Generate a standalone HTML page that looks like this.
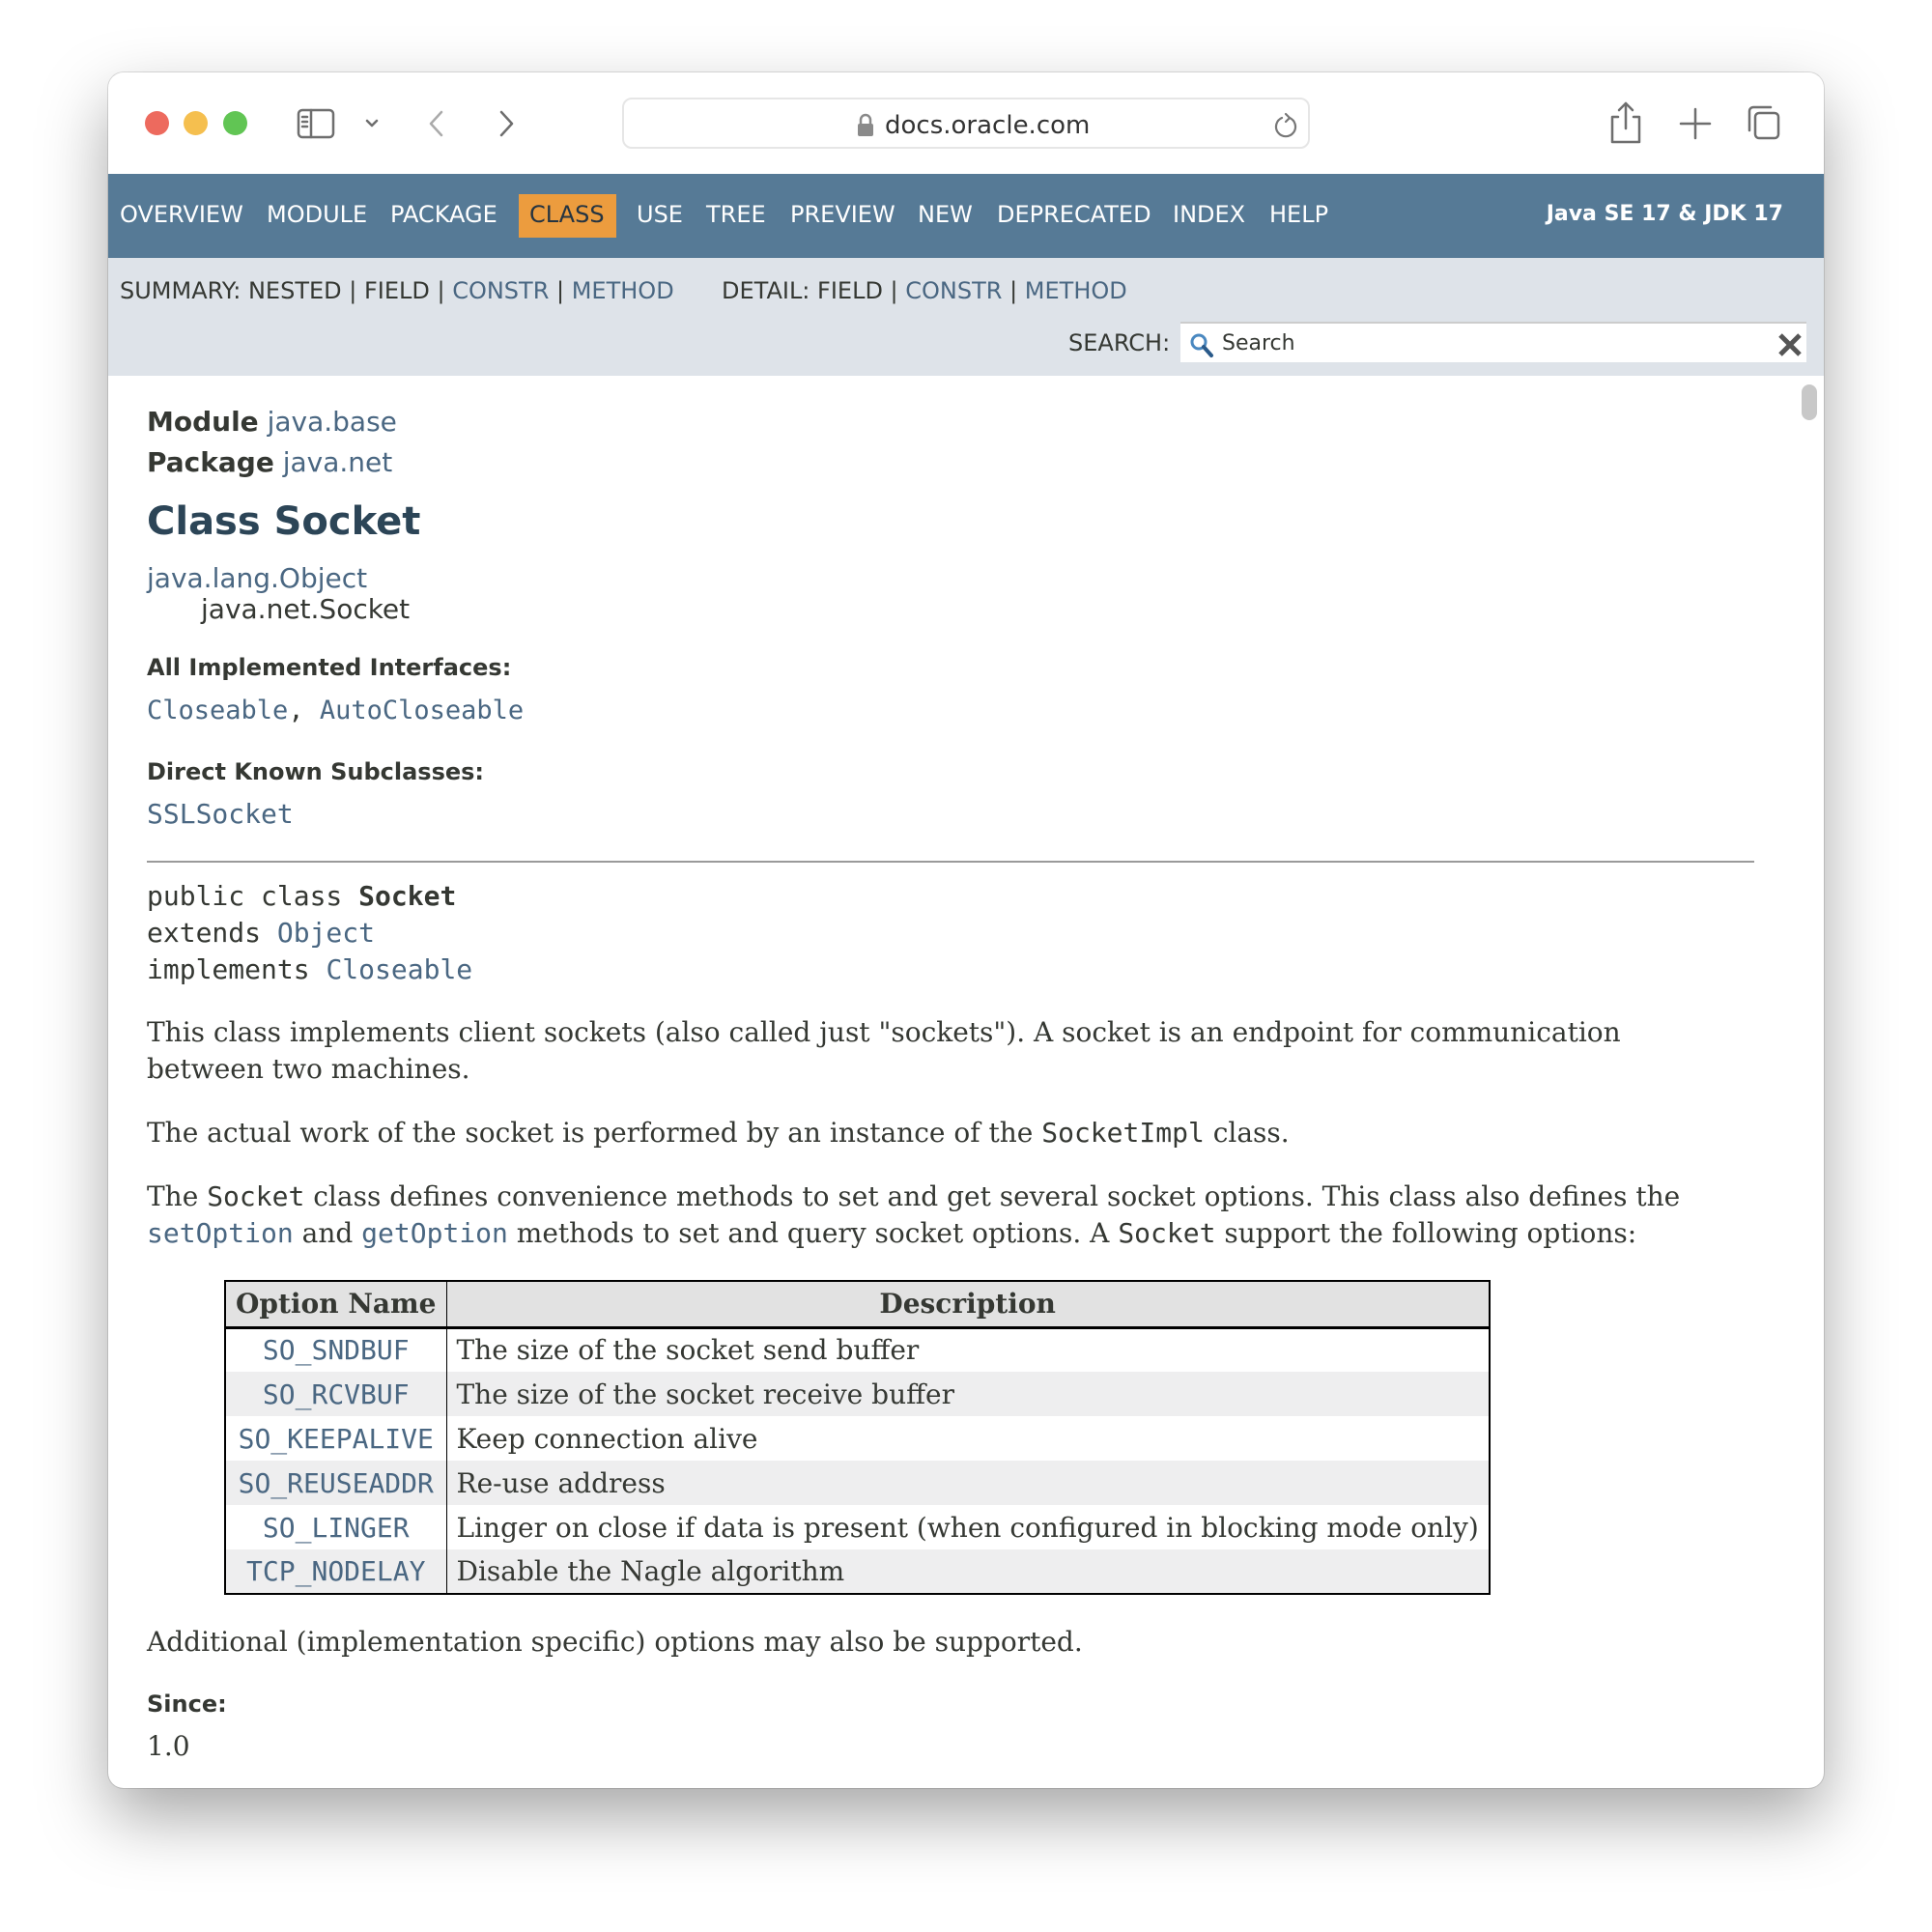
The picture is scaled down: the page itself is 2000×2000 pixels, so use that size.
<!DOCTYPE html>
<html><head><meta charset="utf-8"><style>
*{margin:0;padding:0;box-sizing:border-box}
body{width:2000px;height:2000px;background:#fff;position:relative;overflow:hidden;font-family:"DejaVu Sans","Liberation Sans",sans-serif;color:#353833}
.win{position:absolute;left:112px;top:75px;width:1776px;height:1776px;border-radius:16px;background:#fff;box-shadow:0 30px 70px rgba(0,0,0,.35),0 0 0 1px rgba(0,0,0,.12);overflow:hidden}
.a{position:absolute;white-space:nowrap}
.nav{position:absolute;left:0;top:105px;width:1776px;height:87px;background:#567a96}
.nav .a{color:#fff;font-size:24px;top:28px}
.sub{position:absolute;left:0;top:192px;width:1776px;height:122px;background:#dee3e9}
.sub .a{font-size:24px;color:#353833}
.lk{color:#4a6782}
.serif{font-family:"DejaVu Serif","Liberation Serif",serif}
.mono{font-family:"DejaVu Sans Mono","Liberation Mono",monospace}
.c .a{font-size:28px;line-height:1}
table{position:absolute;left:120px;top:1250px;border-collapse:collapse;border:2px solid #000;font-family:"DejaVu Serif",serif;font-size:28px;color:#353833;white-space:nowrap}
th{background:#e2e2e2;height:48px;border:1px solid #000;border-bottom:3px solid #000;font-weight:bold;padding:0 10px}
td{height:46px;padding:0 10px;border-left:1px solid #000;border-right:1px solid #000}
td.m{font-family:"DejaVu Sans Mono",monospace;color:#4a6782;text-align:center;padding:0 8px}
tr.g td{background:#eeeeef}
</style></head><body>
<div class="win">
 <div class="a" style="left:38px;top:40px;width:25px;height:25px;border-radius:50%;background:#ed6a5e"></div>
 <div class="a" style="left:78px;top:40px;width:25px;height:25px;border-radius:50%;background:#f5bf4f"></div>
 <div class="a" style="left:119px;top:40px;width:25px;height:25px;border-radius:50%;background:#61c554"></div>
 <svg class="a" style="left:195px;top:35px" width="240" height="40" fill="none" stroke="#6e6e6e" stroke-width="2.5" stroke-linecap="round" stroke-linejoin="round">
  <rect x="2" y="4" width="36" height="28" rx="4"/><line x1="15" y1="4" x2="15" y2="32"/>
  <line x1="6" y1="11" x2="11" y2="11"/><line x1="6" y1="16" x2="11" y2="16"/><line x1="6" y1="21" x2="11" y2="21"/>
  <polyline points="73,15 78,20 83,15"/>
  <polyline points="150,6 139,18 150,30" stroke="#aaa"/>
  <polyline points="212,6 223,18 212,30"/>
 </svg>
 <div class="a" style="left:532px;top:26px;width:712px;height:53px;border:2px solid #e6e6e6;border-radius:10px"></div>
 <svg class="a" style="left:774px;top:42px" width="20" height="26"><path d="M5 11V7a5 5 0 0 1 10 0v4" fill="none" stroke="#8a8a8a" stroke-width="2.5"/><rect x="2" y="11" width="16" height="13" rx="2" fill="#8a8a8a"/></svg>
 <div class="a" style="left:804px;top:40px;font-size:26px;color:#333">docs.oracle.com</div>
 <svg class="a" style="left:1206px;top:41px" width="26" height="28" fill="none" stroke="#777" stroke-width="2.2" stroke-linecap="round"><path d="M17 6a10 10 0 1 1-8 0"/><polyline points="13,2 17,6 13,10"/></svg>
 <svg class="a" style="left:1553px;top:28px" width="230" height="50" fill="none" stroke="#6e6e6e" stroke-width="2.5" stroke-linecap="round" stroke-linejoin="round">
  <path d="M10 18H4v26h28V18h-6"/><line x1="18" y1="4" x2="18" y2="30"/><polyline points="11,11 18,4 25,11"/>
  <line x1="90" y1="10" x2="90" y2="40"/><line x1="75" y1="25" x2="105" y2="25"/>
  <rect x="152" y="14" width="24" height="26" rx="4"/><path d="M146 32V12a4 4 0 0 1 4-4h18"/>
 </svg>
 <div class="nav">
  <div class="a" style="left:425px;top:21px;width:101px;height:45px;background:#ec9c3e"></div>
  <div class="a" style="left:12px">OVERVIEW</div>
  <div class="a" style="left:164px">MODULE</div>
  <div class="a" style="left:292px">PACKAGE</div>
  <div class="a" style="left:436px;color:#253441">CLASS</div>
  <div class="a" style="left:547px">USE</div>
  <div class="a" style="left:619px">TREE</div>
  <div class="a" style="left:706px">PREVIEW</div>
  <div class="a" style="left:838px">NEW</div>
  <div class="a" style="left:920px">DEPRECATED</div>
  <div class="a" style="left:1102px">INDEX</div>
  <div class="a" style="left:1202px">HELP</div>
  <div class="a" style="right:42px;font-weight:bold;font-size:22px;top:29px">Java SE 17 &amp; JDK 17</div>
 </div>
 <div class="sub">
  <div class="a" style="left:12px;top:20px">SUMMARY: NESTED | FIELD | <span class="lk">CONSTR</span> | <span class="lk">METHOD</span></div>
  <div class="a" style="left:635px;top:20px">DETAIL: FIELD | <span class="lk">CONSTR</span> | <span class="lk">METHOD</span></div>
  <div class="a" style="left:994px;top:74px">SEARCH:</div>
  <div class="a" style="left:1110px;top:66px;width:648px;height:42px;background:#fff;border-top:2px solid #ccc"></div>
  <svg class="a" style="left:1118px;top:76px" width="30" height="30" fill="none" stroke-linecap="round"><circle cx="11" cy="11" r="7" stroke="#4a88c0" stroke-width="3"/><line x1="16" y1="16" x2="24" y2="25" stroke="#2a5a8a" stroke-width="4"/></svg>
  <div class="a" style="left:1153px;top:76px;font-size:22px">Search</div>
  <svg class="a" style="left:1728px;top:77px" width="26" height="26" stroke="#555" stroke-width="5"><line x1="3" y1="3" x2="23" y2="23"/><line x1="23" y1="3" x2="3" y2="23"/></svg>
 </div>
 <div class="a" style="left:1753px;top:323px;width:16px;height:37px;border-radius:8px;background:#c8c8c8"></div>
 <div class="c">
  <div class="a" style="left:40px;top:348px"><b>Module</b> <span class="lk">java.base</span></div>
  <div class="a" style="left:40px;top:390px"><b>Package</b> <span class="lk">java.net</span></div>
  <div class="a" style="left:40px;top:445px;font-size:40px;font-weight:bold;color:#2c4557">Class Socket</div>
  <div class="a lk" style="left:40px;top:510px">java.lang.Object</div>
  <div class="a" style="left:96px;top:542px">java.net.Socket</div>
  <div class="a" style="left:40px;top:604px;font-size:24px;font-weight:bold">All Implemented Interfaces:</div>
  <div class="a mono" style="left:40px;top:647px;font-size:27px"><span class="lk">Closeable</span>, <span class="lk">AutoCloseable</span></div>
  <div class="a" style="left:40px;top:712px;font-size:24px;font-weight:bold">Direct Known Subclasses:</div>
  <div class="a mono lk" style="left:40px;top:754px">SSLSocket</div>
  <div class="a" style="left:40px;top:816px;width:1664px;height:2px;background:#9a9a9a"></div>
  <div class="a mono" style="left:40px;top:839px">public class <b>Socket</b></div>
  <div class="a mono" style="left:40px;top:877px">extends <span class="lk">Object</span></div>
  <div class="a mono" style="left:40px;top:915px">implements <span class="lk">Closeable</span></div>
  <div class="a serif" style="left:40px;top:980px">This class implements client sockets (also called just "sockets"). A socket is an endpoint for communication</div>
  <div class="a serif" style="left:40px;top:1018px">between two machines.</div>
  <div class="a serif" style="left:40px;top:1084px">The actual work of the socket is performed by an instance of the <span class="mono">SocketImpl</span> class.</div>
  <div class="a serif" style="left:40px;top:1150px">The <span class="mono">Socket</span> class defines convenience methods to set and get several socket options. This class also defines the</div>
  <div class="a serif" style="left:40px;top:1188px"><span class="mono lk">setOption</span> and <span class="mono lk">getOption</span> methods to set and query socket options. A <span class="mono">Socket</span> support the following options:</div>
  <div class="a serif" style="left:40px;top:1611px">Additional (implementation specific) options may also be supported.</div>
  <div class="a" style="left:40px;top:1677px;font-size:24px;font-weight:bold">Since:</div>
  <div class="a serif" style="left:40px;top:1719px">1.0</div>
 </div>
 <table>
  <tr><th style="width:229px">Option Name</th><th>Description</th></tr>
  <tr><td class="m">SO_SNDBUF</td><td>The size of the socket send buffer</td></tr>
  <tr class="g"><td class="m">SO_RCVBUF</td><td>The size of the socket receive buffer</td></tr>
  <tr><td class="m">SO_KEEPALIVE</td><td>Keep connection alive</td></tr>
  <tr class="g"><td class="m">SO_REUSEADDR</td><td>Re-use address</td></tr>
  <tr><td class="m">SO_LINGER</td><td>Linger on close if data is present (when configured in blocking mode only)</td></tr>
  <tr class="g"><td class="m">TCP_NODELAY</td><td>Disable the Nagle algorithm</td></tr>
 </table>
</div>
</body></html>
